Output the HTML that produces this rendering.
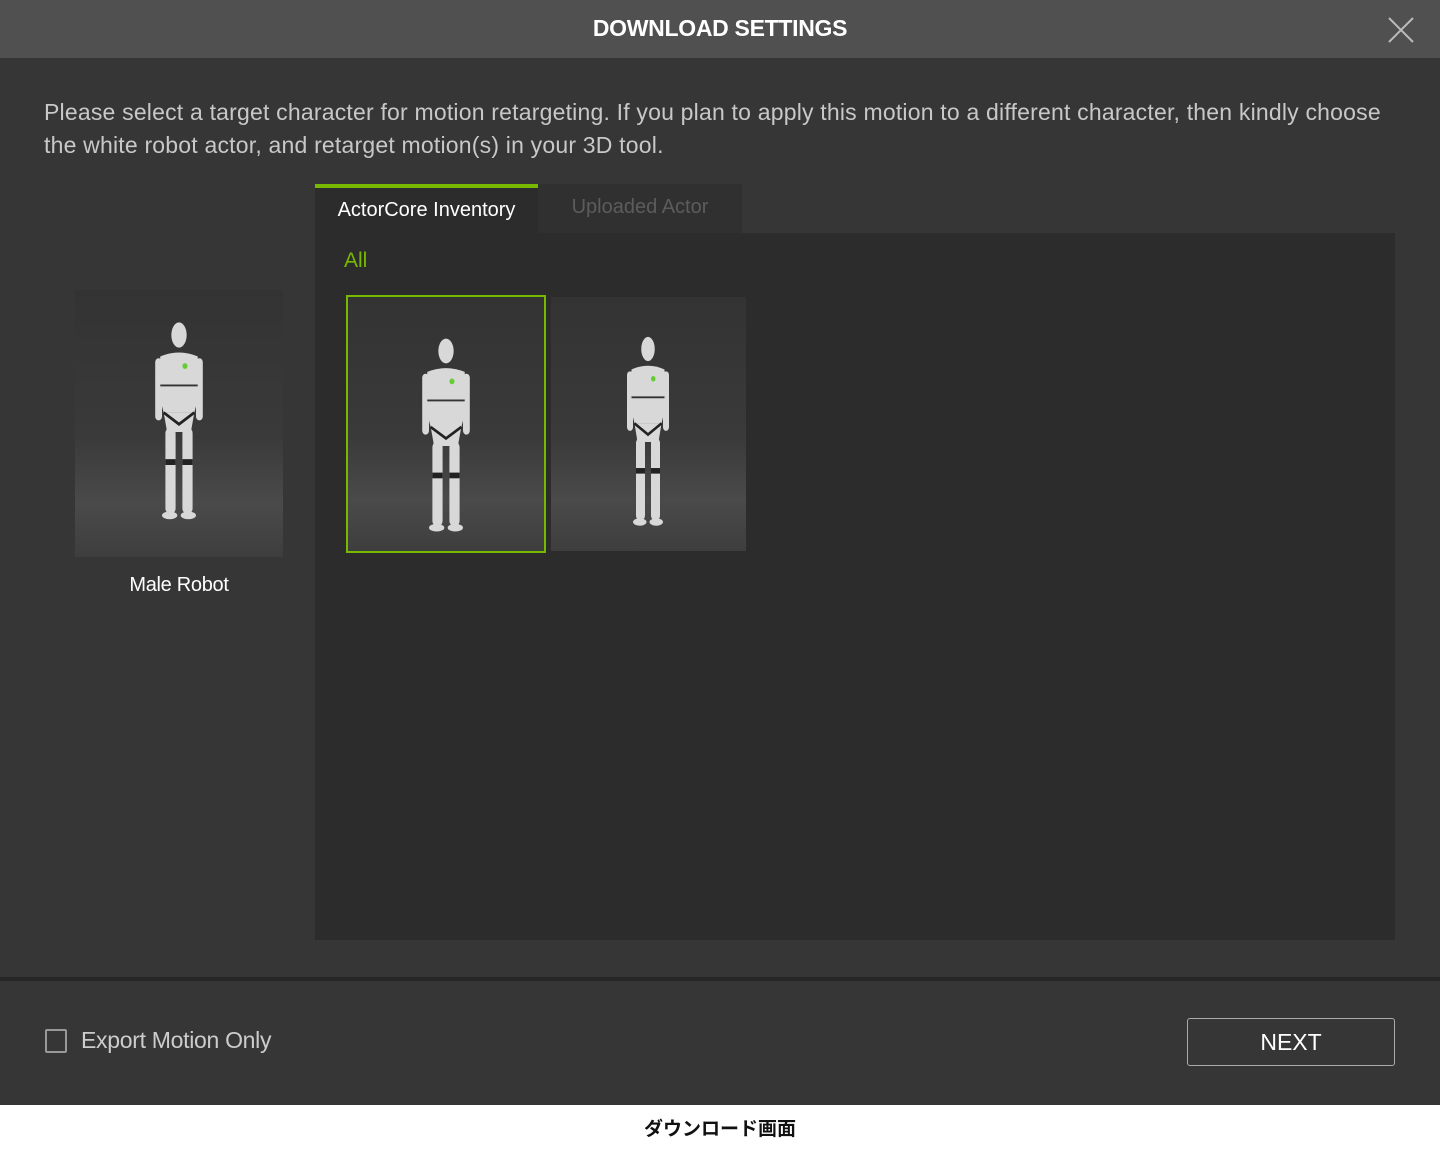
<!DOCTYPE html>
<html><head><meta charset="utf-8"><style>
body{margin:0;width:1440px;height:1153px;background:#fff;font-family:"Liberation Sans","Noto Sans CJK JP",sans-serif;position:relative;overflow:hidden}
.a{position:absolute}
.hdr{left:0;top:0;width:1440px;height:58px;background:#505050;color:#fff;font-weight:bold;font-size:23px;text-align:center;line-height:57px;letter-spacing:-0.3px}
.body{left:0;top:58px;width:1440px;height:920px;background:#363636}
.desc{left:44px;top:96px;width:1345px;color:#c8c8c8;font-size:23px;line-height:33px;letter-spacing:0.2px}
.panel{left:315px;top:233px;width:1080px;height:707px;background:#2c2c2c}
.tab1{left:315px;top:184px;width:223px;height:49px;background:#2c2c2c;border-top:4px solid #76b900;box-sizing:border-box;color:#fff;font-size:20px;line-height:44px;text-align:center}
.tab2{left:538px;top:184px;width:204px;height:49px;background:#303030;color:#5c5c5c;font-size:20px;line-height:47px;text-align:center}
.thumb{background:linear-gradient(#333 0%,#3a3a3a 55%,#4a4a4a 80%,#3e3e3e 100%)}
.foot{left:0;top:981px;width:1440px;height:124px;background:#363636}
.line{left:0;top:977px;width:1440px;height:4px;background:#262626}
</style></head><body>
<div class="a hdr">DOWNLOAD SETTINGS</div>
<svg class="a" style="left:1386px;top:15px" width="30" height="30"><path d="M3 3L27 27M27 3L3 27" stroke="#bbb" stroke-width="2"/></svg>
<div class="a body"></div>
<div class="a desc">Please select a target character for motion retargeting. If you plan to apply this motion to a different character, then kindly choose the white robot actor, and retarget motion(s) in your 3D tool.</div>
<svg width="0" height="0" style="position:absolute"><defs>
<g id="rob" fill="#d8d8d8"><ellipse cx="0" cy="0" rx="9" ry="13"/><path d="M-22 22 Q0 14 22 22 L24 60 L18 80 L-18 80 L-24 60Z"/><rect x="-28" y="24" width="8" height="64" rx="4"/><rect x="20" y="24" width="8" height="64" rx="4"/><path d="M-18 80 L18 80 L14 100 L-14 100Z"/><rect x="-16" y="96" width="12" height="88" rx="5"/><rect x="4" y="96" width="12" height="88" rx="5"/><ellipse cx="-11" cy="186" rx="9" ry="4"/><ellipse cx="11" cy="186" rx="9" ry="4"/><path d="M-18 80 L0 92 L18 80" stroke="#222" stroke-width="3" fill="none"/><path d="M-22 52 L22 52" stroke="#333" stroke-width="2"/><rect x="-16" y="128" width="12" height="6" fill="#222"/><rect x="4" y="128" width="12" height="6" fill="#222"/><circle cx="7" cy="32" r="3" fill="#6c3"/></g></defs></svg>
<div class="a thumb" style="left:75px;top:290px;width:208px;height:267px"><svg width="208" height="267"><use href="#rob" transform="translate(104,45) scale(0.85,0.97)"/></svg></div>
<div class="a" style="left:75px;top:574px;width:208px;text-align:center;color:#fff;font-size:20px;letter-spacing:-0.3px">Male Robot</div>
<div class="a panel"></div>
<div class="a tab1">ActorCore Inventory</div>
<div class="a tab2">Uploaded Actor</div>
<div class="a" style="left:344px;top:249px;color:#76b900;font-size:21px">All</div>
<div class="a thumb" style="left:346px;top:295px;width:200px;height:258px;box-sizing:border-box;border:2px solid #76b900"><svg width="196" height="254"><use href="#rob" transform="translate(98,54) scale(0.85,0.95)"/></svg></div>
<div class="a thumb" style="left:551px;top:297px;width:195px;height:254px"><svg width="195" height="254"><use href="#rob" transform="translate(97,52) scale(0.75,0.93)"/></svg></div>
<div class="a line"></div>
<div class="a foot"></div>
<div class="a" style="left:45px;top:1029px;width:22px;height:24px;border:2px solid #999;border-radius:2px;box-sizing:border-box"></div>
<div class="a" style="left:81px;top:1027px;color:#ccc;font-size:23px;letter-spacing:-0.3px">Export Motion Only</div>
<div class="a" style="left:1187px;top:1018px;width:208px;height:48px;box-sizing:border-box;border:1px solid #aaa;border-radius:3px;color:#fff;font-size:23px;text-align:center;line-height:46px">NEXT</div>
<div class="a" style="left:0;top:1114px;width:1440px;text-align:center;font-size:19px;font-weight:bold;color:#111">ダウンロード画面</div>
</body></html>
